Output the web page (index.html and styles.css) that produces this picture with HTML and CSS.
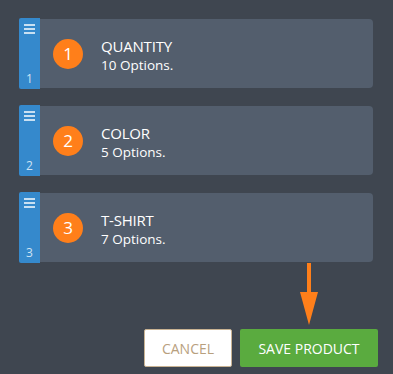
FILE: index.html
```html
<!DOCTYPE html>
<html lang="en">
<head>
    <meta charset="UTF-8">
    <meta name="viewport" content="width=device-width, initial-scale=1.0">
    <title>Product Options</title>
    <link rel="stylesheet" href="styles.css">
</head>
<body>
    <div class="options-list">
        <div class="option-row">
            <div class="handle">
                <span class="grip"><i></i><i></i><i></i></span>
                <span class="handle-num">1</span>
            </div>
            <div class="option-card">
                <div class="badge">1</div>
                <div class="option-text">
                    <div class="option-title">QUANTITY</div>
                    <div class="option-count">10 Options.</div>
                </div>
            </div>
        </div>
        <div class="option-row">
            <div class="handle">
                <span class="grip"><i></i><i></i><i></i></span>
                <span class="handle-num">2</span>
            </div>
            <div class="option-card">
                <div class="badge">2</div>
                <div class="option-text">
                    <div class="option-title">COLOR</div>
                    <div class="option-count">5 Options.</div>
                </div>
            </div>
        </div>
        <div class="option-row">
            <div class="handle">
                <span class="grip"><i></i><i></i><i></i></span>
                <span class="handle-num">3</span>
            </div>
            <div class="option-card">
                <div class="badge">3</div>
                <div class="option-text">
                    <div class="option-title">T-SHIRT</div>
                    <div class="option-count">7 Options.</div>
                </div>
            </div>
        </div>
    </div>

    <div class="arrow-wrap">
        <svg class="arrow" width="18" height="63" viewBox="0 0 18 63">
            <rect x="7" y="0" width="4" height="32" fill="#ff7f1a"/>
            <polygon points="0,29 18,29 9,62" fill="#ff7f1a"/>
        </svg>
    </div>

    <div class="actions">
        <button class="btn btn-cancel">CANCEL</button>
        <button class="btn btn-save">SAVE PRODUCT</button>
    </div>
</body>
</html>
```

FILE: styles.css
```css
body {
    margin: 0;
    background: #3f4650;
    font-family: "Open Sans", "Noto Sans", sans-serif;
    width: 393px;
    height: 374px;
    overflow: hidden;
}

.options-list {
    display: flex;
    flex-direction: column;
    gap: 16px;
    padding: 18px 20px 0 19px;
}

.option-row {
    display: flex;
    height: 71px;
}

.handle {
    width: 21px;
    background: #3589cc;
    border-radius: 2px 0 0 2px;
    display: flex;
    flex-direction: column;
    align-items: center;
    justify-content: space-between;
    padding: 6px 0 3px;
    box-sizing: border-box;
}

.grip {
    display: flex;
    flex-direction: column;
    gap: 2px;
}

.grip i {
    display: block;
    width: 11px;
    height: 2px;
    background: #c9e0f2;
}

.handle-num {
    color: #cfe3f4;
    font-size: 12px;
    line-height: 14px;
}

.option-card {
    flex: 1;
    margin: 1px 0;
    background: #535e6d;
    border-radius: 0 4px 4px 0;
    display: flex;
    align-items: center;
    padding-left: 13px;
}

.badge {
    width: 30px;
    height: 30px;
    border-radius: 50%;
    background: #ff7f1a;
    color: #fff;
    font-size: 17px;
    line-height: 30px;
    text-align: center;
    margin-right: 18px;
}

.option-text {
    color: #fff;
    margin-top: 4px;
}

.option-title {
    font-size: 15px;
    line-height: 19px;
    letter-spacing: -0.2px;
}

.option-count {
    font-size: 13.5px;
    line-height: 19px;
}

.arrow-wrap {
    display: flex;
    justify-content: flex-end;
    padding-right: 75px;
}

.arrow {
    display: block;
}

.actions {
    display: flex;
    justify-content: flex-end;
    gap: 8px;
    padding: 3px 15px 0 0;
}

.btn {
    height: 38px;
    font-family: "Open Sans", "Noto Sans", sans-serif;
    font-size: 14px;
    border-radius: 2px;
    cursor: pointer;
}

.btn-cancel {
    width: 88px;
    background: #fff;
    border: 1px solid #c9b393;
    color: #b8a07e;
}

.btn-save {
    width: 138px;
    background: #5aab3f;
    border: none;
    color: #fff;
}
```
